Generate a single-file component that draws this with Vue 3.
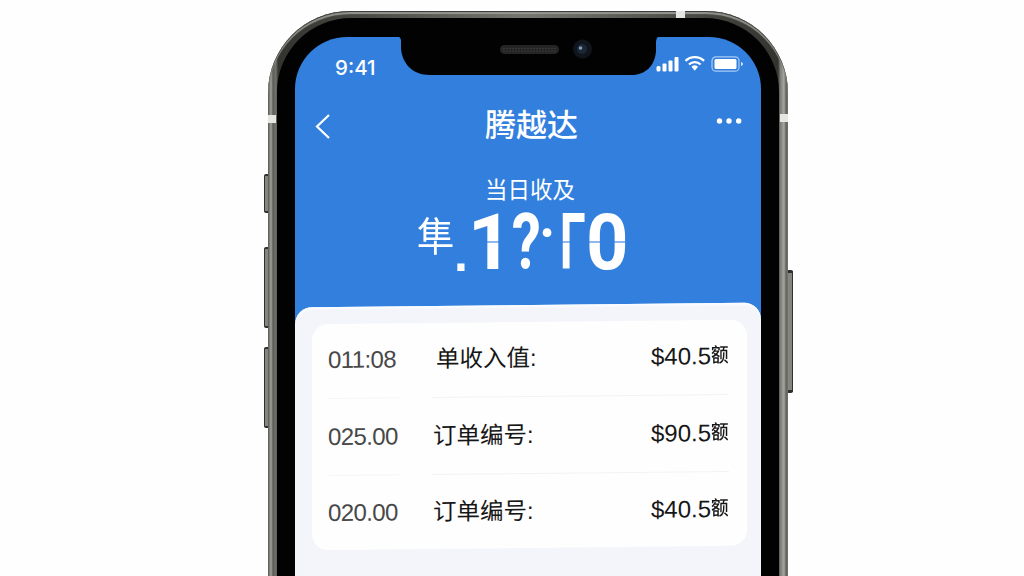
<template>
  <div class="stage">
    <div class="phone">
      <i class="phone__button phone__button--mute"></i>
      <i class="phone__button phone__button--up"></i>
      <i class="phone__button phone__button--down"></i>
      <i class="phone__button phone__button--power"></i>
      <i class="phone__band phone__band--top"></i>
      <i class="phone__band phone__band--left"></i>
      <i class="phone__band phone__band--right"></i>

      <div class="phone__bezel">
        <svg class="phone__notch" width="264" height="58" viewBox="0 0 264 58">
          <path d="M0 0H264V19H262Q260 20 260 25V33C259 48 249 57 236 57H34C17 57 6 46 5 30V22Q4 18 0 18Z" fill="#020203" />
          <rect x="104" y="27" width="59" height="9" rx="4.5" fill="#252525" />
          <path d="M107 30.5H160M107 33H160" stroke="#383838" stroke-width="1" stroke-dasharray="2 1" />
          <circle cx="186.500" cy="31" r="9.500" fill="#10151c" />
          <circle cx="186" cy="31" r="5" fill="#1c2735" />
          <circle cx="184.500" cy="30" r="1.800" fill="#7d9fbe" />
        </svg>

        <div class="screen">
          <div class="status">
            <span class="status__time">9:41</span>
            <svg class="status__icons" width="88" height="18" viewBox="0 0 88 18">
              <g fill="#fff">
                <rect x="0.500" y="11" width="4" height="5.500" rx="1.500" />
                <rect x="6.500" y="8.500" width="4" height="8" rx="1" />
                <rect x="12.500" y="5.500" width="4" height="11" rx="1" />
                <rect x="18.500" y="2" width="4" height="14.500" rx="1" />
                <path d="M35.500 11.700a5 5 0 0 1 6.500 0L38.800 15.800Z" />
                <rect x="58.500" y="4" width="22" height="10" rx="1.500" />
              </g>
              <path d="M29.500 5.800a13.500 13.500 0 0 1 18.600 0M33 9.500a8.500 8.500 0 0 1 11.600 0" fill="none" stroke="#fff" stroke-width="2.300" />
              <rect x="56" y="1.800" width="27" height="14.400" rx="4" fill="none" stroke="#a9ccf5" stroke-width="1.200" />
              <path d="M85 7v4q2-.5 2-2t-2-2Z" fill="#d3e5fb" />
            </svg>
          </div>

          <div class="nav">
            <svg width="18" height="26" viewBox="0 0 18 26">
              <path d="M15 2L3 13.500L15 25" fill="none" stroke="#fff" stroke-width="2.200" />
            </svg>
            <h1 class="nav__title">腾越达</h1>
            <svg width="26" height="8" viewBox="0 0 26 8" fill="#fff">
              <circle cx="3.500" cy="4" r="2.700" />
              <circle cx="13" cy="4" r="2.700" />
              <circle cx="22.700" cy="4" r="2.700" />
            </svg>
          </div>

          <div class="summary">
            <div class="summary__label">当日收及</div>
            <div class="summary__amount">
              <span class="summary__unit">隼</span>
              <span
                v-for="(glyph, i) in digits"
                :key="i"
                class="summary__digit"
                :class="`summary__digit--${glyph.kind}`"
              ><b>{{ glyph.text }}</b></span>
            </div>
          </div>

          <div class="sheet">
            <div class="card">
              <div v-for="(row, i) in rows" :key="i" class="row">
                <span class="row__time">{{ row.time }}</span>
                <div class="row__main">
                  <span class="row__label" :class="{ 'row__label--first': i === 0 }">{{ row.label }}</span>
                  <span class="row__amount">{{ row.amount }}<span class="row__suffix">额</span></span>
                </div>
              </div>
            </div>
          </div>
        </div>
      </div>
    </div>
  </div>
</template>

<script setup>
const digits = [
  { text: '.', kind: 'point' },
  { text: '1', kind: 'one' },
  { text: '?', kind: 'mark' },
  { text: '·', kind: 'dot' },
  { text: 'Γ', kind: 'gamma' },
  { text: '0', kind: 'zero' },
]

const rows = [
  { time: '011:08', label: '单收入值:', amount: '$40.5' },
  { time: '025.00', label: '订单编号:', amount: '$90.5' },
  { time: '020.00', label: '订单编号:', amount: '$40.5' },
]
</script>

<style>
body {
  background: #fefefe;
}
</style>

<style scoped>
.stage {
  display: flex;
  height: 576px;
  padding: 11px 0 0 268px;
  box-sizing: border-box;
  overflow: hidden;
  background: #fefefe;
  font-family: 'Liberation Sans', 'Noto Sans CJK SC', sans-serif;
}

.phone {
  position: relative;
  flex: none;
  width: 520px;
  height: 700px;
  box-sizing: border-box;
  padding: 7px 9px;
  border-radius: 82px 82px 0 0;
  background: linear-gradient(90deg, #55554f 0, #a3a39d 3px, #5c5c57 5px, #74746e 8px, #33332f 10px, #77776f 50%, #33332f 510px, #777771 512px, #a8a8a2 516px, #62625e 518px, #77776f 520px);
  box-shadow: inset 0 1px 1px #333, inset 0 3px 1px #9b9b95;
}

.phone__bezel {
  position: relative;
  height: 700px;
  box-sizing: border-box;
  padding: 19px 18px 0;
  border-radius: 74px 74px 0 0;
  background: #020203;
}

.phone__notch {
  position: absolute;
  top: 0;
  left: 119px;
  z-index: 1;
}

.phone__button {
  position: absolute;
  left: -4px;
  width: 4px;
  box-sizing: border-box;
  border: solid #30302e;
  border-width: 2px 0 2px 1px;
  border-radius: 2px 0 0 2px;
  background: #85857f;
}

.phone__button--mute {
  top: 163px;
  height: 39px;
}

.phone__button--up {
  top: 236px;
  height: 81px;
}

.phone__button--down {
  top: 336px;
  height: 81px;
}

.phone__button--power {
  top: 259px;
  left: 520px;
  height: 123px;
  width: 5px;
  border-width: 3px 1px 3px 0;
  border-radius: 0 2px 2px 0;
}

.phone__band {
  position: absolute;
  background: #e5e5e3;
}

.phone__band--top {
  top: 0;
  left: 408px;
  width: 9px;
  height: 7px;
}

.phone__band--left {
  top: 104px;
  left: 0;
  width: 8px;
  height: 8px;
}

.phone__band--right {
  top: 103px;
  right: 0;
  width: 8px;
  height: 8px;
}

.screen {
  height: 600px;
  overflow: hidden;
  border-radius: 52px 52px 0 0;
  background: #327fdd;
  color: #fff;
}

.status {
  display: flex;
  justify-content: space-between;
  align-items: center;
  height: 20px;
  padding: 20px 17px 0 40px;
}

.status__time {
  font-family: Inter, sans-serif;
  font-size: 20.5px;
  font-weight: 500;
}

.status__icons {
  margin-top: -7px;
}

.nav {
  display: flex;
  justify-content: space-between;
  align-items: center;
  height: 44px;
  padding: 27px 19px 0 19px;
}

.nav svg {
  margin-bottom: 1px;
}

.nav svg:last-child {
  margin-bottom: 11px;
}

.nav__title {
  margin: 0 0 0 15px;
  font-size: 31px;
  line-height: 44px;
  font-weight: 500;
}

.summary {
  display: flex;
  flex-direction: column;
  height: 157px;
  padding-top: 26px;
  box-sizing: border-box;
}

.summary__label {
  padding-left: 190px;
  font-size: 22.5px;
  line-height: 34px;
}

.summary__amount {
  display: flex;
  height: 68px;
  padding-left: 122px;
}

.summary__unit {
  width: 37px;
  font-size: 37px;
  line-height: 60px;
  transform: scaleY(1.08);
}

.summary__digit {
  display: flex;
  justify-content: center;
  height: 68px;
  font-family: Roboto, sans-serif;
  font-size: 78px;
  line-height: 70px;
}

.summary__digit b {
  flex: none;
  color: #fff;
}

.summary__digit--point {
  width: 14px;
  font-family: 'Liberation Sans', sans-serif;
  font-size: 50px;
  line-height: 92px;
}

.summary__digit--one {
  width: 44px;
}

.summary__digit--mark {
  width: 28px;
}

.summary__digit--mark b {
  transform: scaleX(0.75);
}

.summary__digit--dot {
  width: 14px;
  font-size: 60px;
  line-height: 50px;
}

.summary__digit--dot b {
  transform: scaleX(0.9);
}

.summary__digit--gamma {
  width: 37px;
}

.summary__digit--gamma b {
  transform: scaleX(0.6);
}

.summary__digit--zero {
  width: 32px;
}

.summary__digit--zero b {
  transform: scaleX(0.95);
}

/* segment seam halfway down the figures */
.summary__digit--one b,
.summary__digit--gamma b,
.summary__digit--zero b {
  color: transparent;
  background: linear-gradient(#fff 49%, #8fb9ee 49%, #8fb9ee 51%, #fff 51%);
  -webkit-background-clip: text;
  background-clip: text;
}

.sheet {
  height: 320px;
  padding: 17px 14px 0 17px;
  border-radius: 17px 17px 0 0;
  background: #f3f5fb;
  box-shadow: inset 0 2px 2px #fafdff;
  transform: skewY(-0.6deg);
}

.card {
  height: 226px;
  padding: 0 18px 0 16px;
  box-sizing: border-box;
  border-radius: 16px;
  background: #fefefe;
}

.row {
  display: flex;
  justify-content: space-between;
  height: 76.5px;
  color: #161616;
}

.row__time {
  width: 72px;
  height: 74px;
  font-size: 24px;
  line-height: 71px;
  letter-spacing: -0.6px;
  color: #484848;
  border-bottom: 1px solid #f5f5f5;
}

.row__main {
  display: flex;
  justify-content: space-between;
  width: 297px;
  height: 74px;
  line-height: 72px;
  border-bottom: 1px solid #f3f3f3;
}

.row:last-child > * {
  border-bottom: 0;
}

.row__label {
  padding-left: 1px;
  font-size: 23.5px;
}

.row__label--first {
  padding-left: 4px;
}

.row__amount {
  display: flex;
  font-size: 24px;
  line-height: 71px;
}

.row__suffix {
  width: 18px;
  font-size: 20px;
  font-weight: 500;
  transform: scaleX(0.88);
  transform-origin: left;
}
</style>
